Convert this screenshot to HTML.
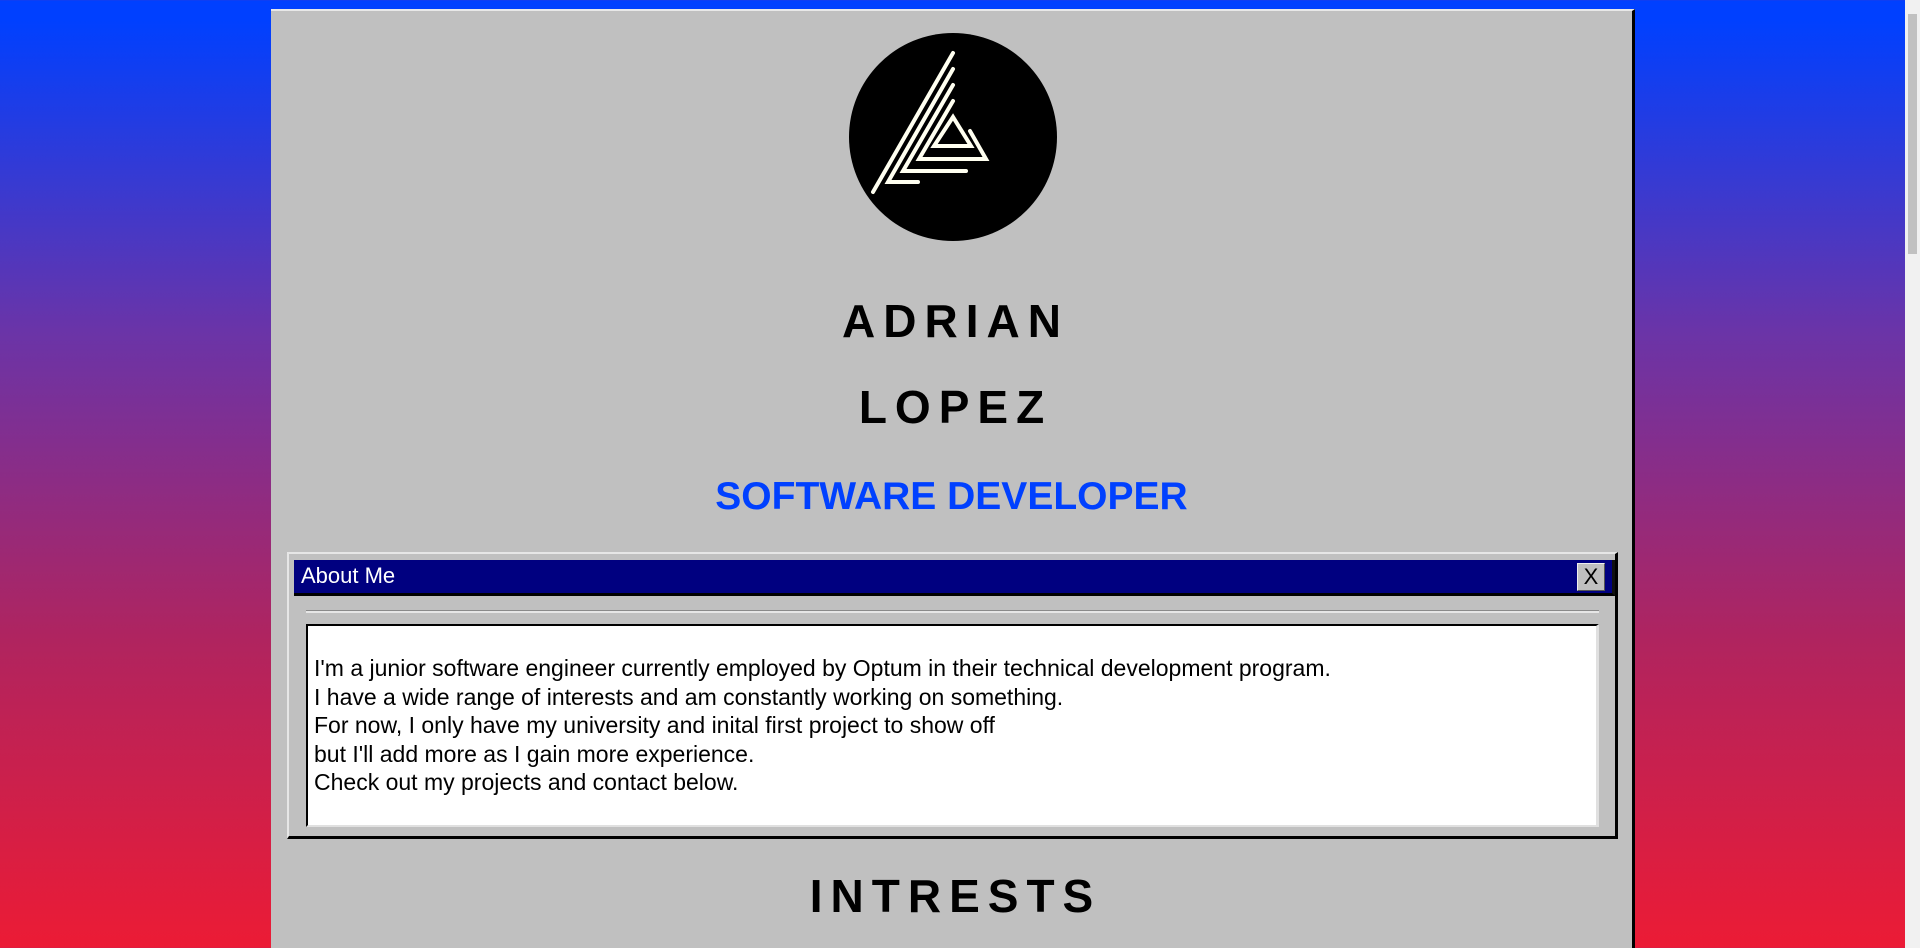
<!DOCTYPE html>
<html><head><meta charset="utf-8"><style>
html,body{margin:0;padding:0;width:1920px;height:948px;overflow:hidden}
body{background:linear-gradient(#0040ff 0px,#0040ff 20px,#6a34a8 330px,#b0245f 640px,#ec1b35 948px);font-family:"Liberation Sans",sans-serif;position:relative}
.sb{position:absolute;right:0;top:0;width:15px;height:948px;background:#f1f1f1}
.sb i{position:absolute;left:3px;top:14px;width:9px;height:240px;background:#c1c1c1}
.main{position:absolute;left:271px;top:9px;width:1361px;height:950px;background:#c0c0c0;border-top:2px solid #e8e8e8;border-right:3px solid #000}
.c{position:absolute;left:0;width:100%;text-align:center;font-weight:bold;color:#000}
.logo{position:absolute;left:578px;top:22px;width:208px;height:208px;border-radius:50%;background:#000}
.win{position:absolute;left:16px;top:541px;width:1326px;height:282px;border-top:2px solid #e6e6e6;border-left:2px solid #e6e6e6;border-right:3px solid #000;border-bottom:3px solid #000;background:#c0c0c0}
.tb{position:absolute;left:5px;top:6px;width:1318px;height:33px;background:#000080;border-bottom:3px solid #000;border-right:3px solid #111}
.tb span{position:absolute;left:7px;top:3px;color:#fff;font-size:22px}
.x{position:absolute;right:7px;top:3px;width:26px;height:26px;background:#c0c0c0;border:1px solid #eee;border-right-color:#555;border-bottom-color:#555;font-size:22px;text-align:center;line-height:26px;color:#000}
.hr{position:absolute;left:17px;top:56px;width:1293px;height:1px;background:#8a8a8a;border-bottom:2px solid #e6e6e6}
.tx{position:absolute;left:17px;top:70px;width:1293px;height:203px;background:#fff;border-top:2px solid #000;border-left:2px solid #000;border-right:3px solid #e0e0e0;border-bottom:2px solid #e0e0e0;font-size:23px;line-height:28.6px;padding:28px 0 0 6px;box-sizing:border-box;color:#000;white-space:nowrap}
</style></head><body>
<div class="main">
<div class="logo"><svg width="208" height="208" viewBox="0 0 208 208" fill="none" stroke="#fffff0" stroke-width="4" stroke-linecap="round">
<line x1="104" y1="20" x2="24" y2="159"/>
<path d="M104 36 L39 149 L69 149"/>
<path d="M104 52 L54 138 L117 138"/>
<path d="M104 68 L70 126 L137 126 L121 98"/>
<path d="M104 84 L85 113 L122 113 Z"/>
</svg></div>
<div class="c" style="top:283px;font-size:46px;letter-spacing:8px;padding-left:8px;box-sizing:border-box">ADRIAN</div>
<div class="c" style="top:369px;font-size:46px;letter-spacing:8px;padding-left:8px;box-sizing:border-box">LOPEZ</div>
<div class="c" style="top:464px;font-size:39px;color:#0040ff">SOFTWARE DEVELOPER</div>
<div class="win">
<div class="tb"><span>About Me</span><div class="x">X</div></div>
<div class="hr"></div>
<div class="tx">I'm a junior software engineer currently employed by Optum in their technical development program.<br>I have a wide range of interests and am constantly working on something.<br>For now, I only have my university and inital first project to show off<br>but I'll add more as I gain more experience.<br>Check out my projects and contact below.</div>
</div>
<div class="c" style="top:858px;font-size:46px;letter-spacing:8px;padding-left:8px;box-sizing:border-box">INTRESTS</div>
</div>
<div class="sb"><i></i></div>
</body></html>
